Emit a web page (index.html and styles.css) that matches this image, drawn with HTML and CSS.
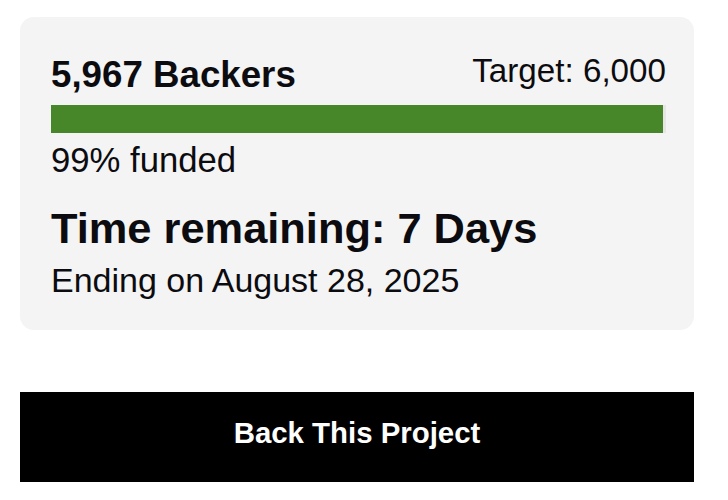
FILE: index.html
```html
<!DOCTYPE html>
<html lang="en">
<head>
<meta charset="utf-8">
<title>Project funding</title>
<link rel="stylesheet" href="styles.css">
</head>
<body>
<main class="page">
  <section class="card">
    <div class="card-head">
      <h2 class="backers">5,967 Backers</h2>
      <span class="target">Target: 6,000</span>
    </div>
    <div class="track"><div class="fill" style="width: 99.45%"></div></div>
    <p class="funded">99% funded</p>
    <h3 class="remaining">Time remaining: 7 Days</h3>
    <p class="ending">Ending on August 28, 2025</p>
  </section>
  <button class="back-btn" type="button">Back This Project</button>
</main>
</body>
</html>
```

FILE: styles.css
```css
* { box-sizing: border-box; }
html, body { margin: 0; padding: 0; background: #ffffff; }
body {
  font-family: "Liberation Sans", Arial, sans-serif;
  color: #0c0c10;
}
.page {
  padding: 17px 34px 0 20px;
  display: flex;
  flex-direction: column;
  gap: 62px;
}
.card {
  background: #f4f4f4;
  border-radius: 14px;
  padding: 34px 28px 30px 31px;
  display: flex;
  flex-direction: column;
}
.card-head {
  display: flex;
  justify-content: space-between;
  align-items: flex-start;
}
.backers {
  margin: 0;
  font-size: 36.7px;
  line-height: 48px;
  font-weight: 700;
}
.target {
  font-size: 33.2px;
  line-height: 40px;
}
.track {
  margin-top: 6px;
  height: 28px;
  background: #e6e6e6;
}
.fill {
  height: 100%;
  background: #478729;
}
.funded {
  margin: 7px 0 0;
  font-size: 34.7px;
  line-height: 40px;
}
.remaining {
  margin: 23px 0 0;
  font-size: 43.4px;
  line-height: 50px;
  font-weight: 700;
}
.ending {
  margin: 7px 0 0;
  font-size: 34px;
  line-height: 40px;
}
.back-btn {
  display: block;
  width: 100%;
  height: 90px;
  margin: 0;
  padding: 24px 0 32px;
  border: 0;
  border-radius: 0;
  background: #000000;
  color: #ffffff;
  font-family: "Liberation Sans", Arial, sans-serif;
  font-size: 29.4px;
  line-height: 34px;
  font-weight: 700;
  text-align: center;
}
```
